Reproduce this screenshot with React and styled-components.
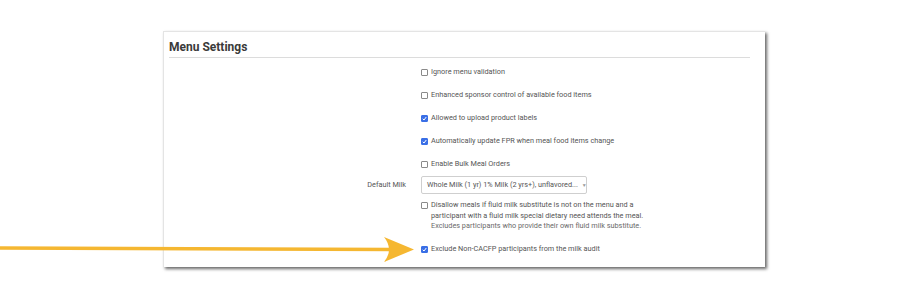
import React from 'react'
import styled, { createGlobalStyle } from 'styled-components'

const Global = createGlobalStyle`
    body {
        margin: 0;
        background: #fff;
        font-family: Roboto, "Liberation Sans", Arial, sans-serif;
    }
`

const Page = styled.div`
    position: relative;
    width: 900px;
    height: 300px;
    padding: 31px 0 0 163px;
    box-sizing: border-box;
`

const Panel = styled.div`
    width: 602px;
    height: 236px;
    box-sizing: border-box;
    background: #fff;
    border-top: 1px solid #e4e4e4;
    border-left: 1px solid #e4e4e4;
    box-shadow: 2px 2px 3px rgba(0, 0, 0, 0.6);
    padding: 0 15px 0 5px;
`

const Title = styled.h2`
    margin: 0;
    height: 25px;
    line-height: 30px;
    font-size: 12px;
    font-weight: 700;
    color: #3a3a3a;
    border-bottom: 1px solid #dcdcdc;
`

const Form = styled.div`
    display: grid;
    grid-template-columns: 252px 1fr;
    padding-top: 3px;
`

const Label = styled.div`
    text-align: right;
    padding-right: 15px;
    font-size: 7.3px;
    color: #555;
    height: ${p => p.$h || 23}px;
    line-height: ${p => p.$h || 23}px;
    margin-bottom: ${p => p.$mb || 0}px;
    margin-top: ${p => p.$mt || 0}px;
`

const Field = styled.label`
    display: flex;
    align-items: ${p => (p.$top ? 'flex-start' : 'center')};
    gap: 3px;
    font-size: 7.3px;
    color: #555;
    line-height: 10.5px;
    min-height: ${p => p.$h || 23}px;
    margin-bottom: ${p => p.$mb || 0}px;
    margin-top: ${p => p.$mt || 0}px;
`

const Box = styled.span`
    flex: none;
    width: 7px;
    height: 7px;
    box-sizing: border-box;
    border: 1px solid ${p => (p.$on ? '#3a6fe6' : '#8a8a8a')};
    border-radius: 1px;
    background: ${p => (p.$on ? '#3a6fe6' : '#fff')};
    margin-top: ${p => (p.$top ? '2px' : '0')};
    display: flex;
    align-items: center;
    justify-content: center;
`

const Help = styled.span`
    color: #6a6a6a;
`

const Select = styled.div`
    width: 166px;
    height: 18px;
    box-sizing: border-box;
    border: 1px solid #cfcfcf;
    border-radius: 2px;
    display: flex;
    align-items: center;
    justify-content: space-between;
    padding: 0 5px;
    font-size: 7.3px;
    color: #555;
    white-space: nowrap;
    overflow: hidden;
`

const Caret = styled.span`
    font-size: 5px;
    color: #999;
    margin-left: 4px;
`

const Arrow = styled.svg`
    position: absolute;
    left: 0;
    top: 235px;
`

const Check = ({ on, top }) => (
    <Box $on={on} $top={top}>
        {on && (
            <svg width="5" height="5" viewBox="0 0 10 10">
                <path d="M1.5 5.5 L4 8 L8.5 2" stroke="#fff" strokeWidth="2" fill="none" />
            </svg>
        )}
    </Box>
)

const rows = [
    ['Ignore menu validation', false],
    ['Enhanced sponsor control of available food items', false],
    ['Allowed to upload product labels', true],
    ['Automatically update FPR when meal food items change', true],
    ['Enable Bulk Meal Orders', false],
]

const App = () => (
    <Page>
        <Global />
        <Panel>
            <Title>Menu Settings</Title>
            <Form>
                {rows.map(([text, on]) => (
                    <React.Fragment key={text}>
                        <Label />
                        <Field>
                            <Check on={on} />
                            {text}
                        </Field>
                    </React.Fragment>
                ))}
                <Label $h={18} $mb={6}>Default Milk</Label>
                <Field $h={18} $mb={6}>
                    <Select>
                        Whole Milk (1 yr) 1% Milk (2 yrs+), unflavored...
                        <Caret>▼</Caret>
                    </Select>
                </Field>
                <Label $h={32} />
                <Field $top $h={32}>
                    <Check top />
                    <span>
                        Disallow meals if fluid milk substitute is not on the menu and a<br />
                        participant with a fluid milk special dietary need attends the meal.<br />
                        <Help>Excludes participants who provide their own fluid milk substitute.</Help>
                    </span>
                </Field>
                <Label $mt={6} />
                <Field $mt={6}>
                    <Check on />
                    Exclude Non-CACFP participants from the milk audit
                </Field>
            </Form>
        </Panel>
        <Arrow width="420" height="30" viewBox="0 0 420 30">
            <line x1="0" y1="13" x2="392" y2="14.5" stroke="#F5B731" strokeWidth="3.5" />
            <path d="M384 2 L414 14.5 L384 27 Q394 14.5 384 2 Z" fill="#F5B731" />
        </Arrow>
    </Page>
)

export default App
